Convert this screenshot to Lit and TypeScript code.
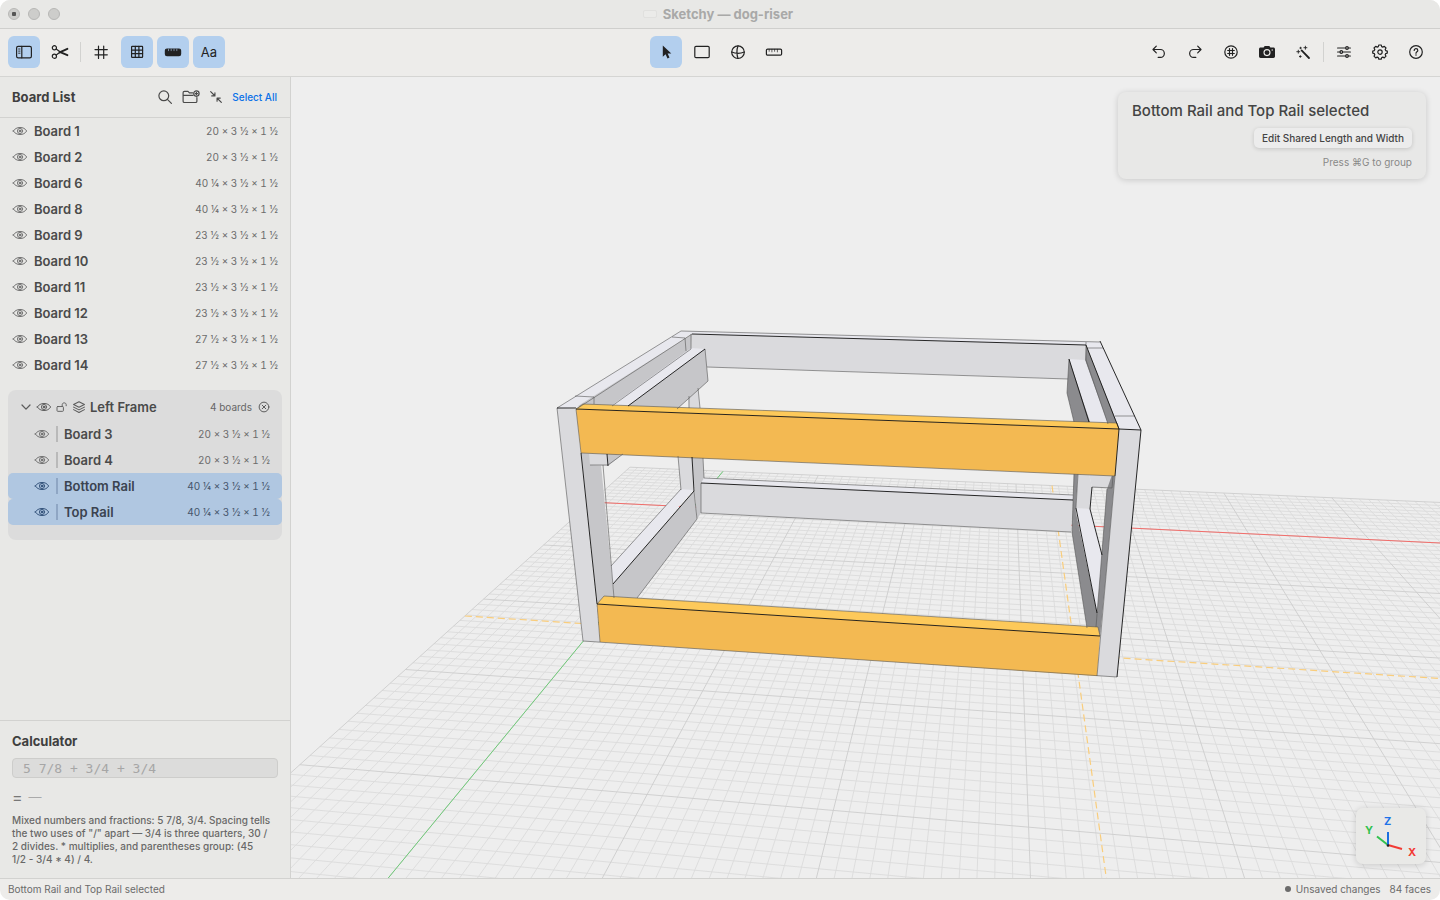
import { LitElement, html, css, svg, nothing } from "lit";
import { customElement, property } from "lit/decorators.js";
import { classMap } from "lit/directives/class-map.js";

const icons: Record<string, unknown> = {
  sidebar: svg`<rect x="1.6" y="3.4" width="14.8" height="11.4" rx="1.6"/><path d="M6.8 3.4v11.4"/><path d="M3.6 6h1.4M3.6 8.1h1.4M3.600 10.200h1.400" stroke-width=".9"/>`,
  scissors: svg`<circle cx="3.4" cy="4.8" r="2.1"/><circle cx="3.4" cy="13.2" r="2.1"/><path d="M5.2 6 8.600 8.400M5.200 12 8.600 9.600"/><path d="m8.600 8.800 7.800 3.400M8.600 9.400l7.800-3.600" stroke-width="1.900"/>`,
  hash: svg`<path d="M6.5 3v12.4M11.7 3v12.4M3 6.6h12.3M3 11.8h12.3"/>`,
  grid: svg`<rect x="3.6" y="3.4" width="11" height="11" rx=".6"/><path d="M7.3 3.4v11M10.900 3.400v11M3.600 7.100h11M3.600 10.700h11"/>`,
  rulerFill: svg`<rect x="1.4" y="6" width="15.2" height="6.6" rx="1.6" fill="currentColor"/><path d="M4.500 6.200v1.500M7.200 6.200v1.500M10 6.200v1.500M12.800 6.200v1.500" stroke="#b3cfee" stroke-width=".6"/>`,
  cursor: svg`<path d="M5.8 2.6v11.2l2.8-2.5 1.9 4.2 2-.9-1.9-4.1h3.7z" fill="currentColor" stroke="none"/>`,
  rect: svg`<rect x="1.8" y="3.4" width="14.4" height="11.2" rx="1.2"/>`,
  sphere: svg`<circle cx="9" cy="9.2" r="6.3"/><path d="M9 2.9C7.6 6 7.6 12 9 15.5M2.7 9c3.6 1.5 9 1.5 12.6 0"/>`,
  ruler: svg`<rect x="1.4" y="6.1" width="15.2" height="6" rx="1.2"/><path d="M4.2 6.3v2M6.9 6.3v2.6M9.6 6.3v2M12.4 6.3v2.6" stroke-width=".7"/>`,
  undo: svg`<path d="M6.3 3.2 3 6.5l3.3 3.3M3.2 6.5h7.2a3.9 3.9 0 0 1 0 7.9H8.2"/>`,
  redo: svg`<path d="M11.7 3.2 15 6.5l-3.3 3.3M14.8 6.5H7.6a3.9 3.9 0 0 0 0 7.9h2.2"/>`,
  hashCircle: svg`<circle cx="9" cy="9" r="6.2"/><path d="M7.5 5.7v6.6M10.5 5.7v6.6M5.7 7.5h6.6M5.7 10.5h6.6"/>`,
  camera: svg`<path d="M2.6 4.6h3l1.1-1.7h4.6l1.1 1.7h3c.9 0 1.6.7 1.6 1.6v7.1c0 .9-.7 1.6-1.6 1.6H2.6c-.9 0-1.6-.7-1.6-1.6V6.2c0-.9.7-1.6 1.6-1.6z" fill="currentColor" stroke="none"/><circle cx="9" cy="9.6" r="3" stroke="#edecea" stroke-width="1.1"/><circle cx="14.2" cy="7" r=".7" fill="#edecea" stroke="none"/>`,
  wand: svg`<path d="M7.6 7.4 15 15" stroke-width="1.8"/><path d="M11.4 3.2v3M9.9 4.7h3M4.3 7.2v3M2.8 8.7h3M6.3 12.6v1.8M5.4 13.5h1.8M6.6 4.2v1.6M5.8 5h1.6" stroke-width=".9"/>`,
  sliders: svg`<path d="M2.6 5h8.100M13.300 5h2.100M2.600 9H5M7.600 9h7.800M2.600 13h8.100M13.300 13h2.100"/><circle cx="12" cy="5" r="1.3"/><circle cx="6.3" cy="9" r="1.3"/><circle cx="12" cy="13" r="1.3"/>`,
  gear: svg`<path d="M7.8 2h2.4l.5 1.6 1.1.5 1.5-.8L15 5l-.8 1.5.5 1.1 1.6.5v2l-1.6.5-.5 1.1.8 1.5-1.7 1.7-1.5-.8-1.1.5-.5 1.6H7.8l-.5-1.6-1.1-.5-1.5.8L3 13.200l.8-1.500-.5-1.100-1.600-.5v-2l1.600-.5.5-1.100L3 5l1.700-1.700 1.500.8 1.100-.5z"/><circle cx="9" cy="9.100" r="2.200"/>`,
  help: svg`<circle cx="9" cy="9" r="6.3"/><path d="M7.2 7.400c0-2.300 3.600-2.300 3.600 0 0 1.400-1.800 1.400-1.800 2.900"/><circle cx="9" cy="12.100" r=".75" fill="currentColor" stroke="none"/>`,
  search: svg`<circle cx="7.8" cy="7.8" r="4.9"/><path d="m11.4 11.4 4 4"/>`,
  folderPlus: svg`<path d="M10.6 4.8H7.4L6 3.400H2.400c-.8 0-1.300.5-1.300 1.300v8.500c0 .8.5 1.300 1.300 1.300h11.200c.8 0 1.300-.5 1.300-1.300V9.600M1.100 7.400h9.800"/><circle cx="14.400" cy="5.600" r="2.700"/><path d="M14.400 4.400v2.400M13.200 5.600h2.400"/>`,
  collapse: svg`<path d="m3 3 4.600 4.600M7.800 4.200v3.600H4.200M15 15l-4.600-4.600M10.200 13.800v-3.600h3.600"/>`,
  eye: svg`<path d="M1.5 9C4.500 3.600 13.500 3.600 16.500 9 13.500 14.400 4.500 14.400 1.500 9z"/><circle cx="9" cy="9" r="2.900"/><circle cx="9" cy="9" r="1" fill="currentColor"/>`,
  unlock: svg`<rect x="1.5" y="8.3" width="9.6" height="7.2" rx="1.2"/><path d="M9.3 8.300V5.500c0-3.600 6-3.600 6 0v1.600"/>`,
  layers: svg`<path d="m9 2.200 7 3.600-7 3.600-7-3.600zM2 9.100l7 3.600 7-3.600M2 12.400 9 16l7-3.600"/>`,
  chevron: svg`<path d="m3 6 6 6.200L15 6"/>`,
  close: svg`<circle cx="9" cy="9" r="7.3"/><path d="m6.300 6.300 5.400 5.400M11.700 6.300l-5.400 5.400"/>`,
};

const icon = (name: string, size = 18, stroke = 1.2) => html`<svg
  width=${size} height=${size} viewBox="0 0 18 18" fill="none" stroke="currentColor"
  stroke-width=${stroke} stroke-linecap="round" stroke-linejoin="round" aria-hidden="true">${icons[name]}</svg>`;

const reset = css`
  * { box-sizing: border-box; }
  button {
    font: inherit; color: inherit; background: none; border: 0; padding: 0; margin: 0;
    display: inline-flex; align-items: center; justify-content: center;
  }
  svg { display: block; flex: none; }
`;

interface Board { name: string; dims: string; selected?: boolean; }

@customElement("board-row")
class BoardRow extends LitElement {
  @property({ attribute: false }) board!: Board;
  @property({ type: Boolean }) nested = false;

  static styles = [reset, css`
    :host { display: block; }
    .row {
      display: flex; align-items: center; height: 26px; padding: 0 12px; color: #4a4a4a;
    }
    .name { margin-left: 6px; flex: 1; font-size: 13px; font-weight: 600; text-align: left; }
    .dims { font-size: 10px; color: #6b6b6b; white-space: nowrap; font-variant-numeric: tabular-nums; }
    .eye { color: #707070; }
    .nested { padding: 0 12px 0 26px; }
    .bar { width: 2px; height: 16px; margin-left: 6px; background: #b9b9b9; }
    .selected { background: #b0c7e1; border-radius: 5px; color: #3b4350; }
    .selected .eye { color: #33527a; }
    .selected .dims { color: #46566c; }
    .selected .bar { background: #8fa6c4; }
  `];

  render() {
    const b = this.board;
    return html`<div class=${classMap({ row: true, nested: this.nested, selected: !!b.selected })}>
      <button class="eye" aria-label="Toggle visibility of ${b.name}">${icon("eye", 16, 1.1)}</button>
      ${this.nested ? html`<span class="bar"></span>` : nothing}
      <span class="name">${b.name}</span>
      <span class="dims">${b.dims}</span>
    </div>`;
  }
}

/** Ground plane projection. Units are feet; both vanishing points lie on the horizon. */
const HORIZON = 131;
const ground = (x: number, y: number): [number, number] => {
  const depth = 376 / (1 - 0.0133 * x - 0.105 * y);
  return [1003 + depth * (0.2866 * x - 0.823), HORIZON + depth];
};
const segment = (a: [number, number], b: [number, number]) => {
  const [p, q] = [ground(...a), ground(...b)];
  return `M${p[0].toFixed(1)} ${p[1].toFixed(1)}L${q[0].toFixed(1)} ${q[1].toFixed(1)}`;
};
const MIN = -1, MAX_X = 9, MAX_Y = 6;
const gridLines = (major: boolean) => {
  let d = "";
  for (let i = MIN * 12; i <= MAX_X * 12; i++) {
    if ((i % 12 === 0) === major) d += segment([i / 12, MIN], [i / 12, MAX_Y]);
  }
  for (let i = MIN * 12; i <= MAX_Y * 12; i++) {
    if ((i % 12 === 0) === major) d += segment([MIN, i / 12], [MAX_X, i / 12]);
  }
  return d;
};

const LIGHT = "#dadadd", TOP = "#e8e8ee", MID = "#c6c6c9", DARK = "#8b8b8e", FACE = "#f3b952", FACE_TOP = "#fdc95a";

const faces: [string, string][] = [
  // back rails
  [LIGHT, "692,334 1086,345 1085,362 1068,379 707,367 691,350"],
  [TOP, "681,331 1100,342 1086,345 692,334"],
  [TOP, "704,478 1073,495 1073,500 701,483"],
  [LIGHT, "701,483 1073,500 1071,532 701,513"],
  // back left post
  [LIGHT, "688,397 698,388 700,408 689,408"],
  [LIGHT, "678,456 692,457 694,491 681,490"],
  [MID, "692,457 703,458 704,478 701,483 701,513 697,519"],
  // left side
  [TOP, "681,331 692,333 578,408 557,408"],
  [MID, "692,334 691,349 612,406 578,406"],
  [TOP, "691,348 705,349 628,406 611,406"],
  [MID, "705,349 708,381 677,409 628,406"],
  [TOP, "681,489 693,490 613,584 611,566"],
  [MID, "694,491 697,519 637,598 614,598 613,584"],
  [MID, "581,453 600,454 614,598 597,604"],
  [MID, "607,454 623,454 608,466"],
  [LIGHT, "589,453 607,454 608,466 590,465"],
  [LIGHT, "557,408 576,409 600,642 583,641"],
  // right side
  [TOP, "1086,342 1100,342 1141,430 1119,429"],
  [DARK, "1086,345 1119,428 1107,424 1085,361"],
  [TOP, "1069,359 1085,360 1108,424 1089,422"],
  [DARK, "1069,359 1067,393 1074,422 1090,422"],
  [DARK, "1074,473 1078,473 1076,508 1072,532"],
  [LIGHT, "1078,473 1089,474 1092,487 1090,509 1076,508"],
  [LIGHT, "1089,474 1114,475 1112,488 1092,487"],
  [TOP, "1076,508 1090,509 1102,555 1097,613"],
  [DARK, "1075,508 1072,532 1087,628 1097,628 1097,613"],
  [DARK, "1112,475 1117,475 1100,636 1096,627 1107,489"],
  [LIGHT, "1119,429 1141,430 1117,677 1097,676"],
  // selected front rails
  [FACE, "576,409 1119,429 1115,476 581,453"],
  [FACE_TOP, "583,404 1117,423 1119,429 576,409"],
  [FACE, "597,604 1100,636 1097,676 600,642"],
  [FACE_TOP, "604,596 1098,627 1100,636 597,604"],
];

const strongEdges = "M692 334 1086 345M576 409 1119 429M597 604 1100 636M701 483 1073 500M557 408H576M1119 429 1141 430 1117 677M581 453 597 604M1100 341 1141 430M705 349 628 406M694 491 613 584M1119 429 1115 476M1086 345 1119 429M1069 359 1089 422M1076 508 1097 613M607 454 608 466M692 457 694 491M1102 555 1090 509 1092 487";
const fineEdges = "M681 331 1100 342M681 331 557 408 583 641 1117 677M692 334 578 408M672 337 685 338M575 396 594 397M685 338 686 351M594 397V404M691 334V349L612 406M705 349 708 381 677 409M707 367 1068 379M681 489 611 566M694 491 697 519 637 598M678 456 681 490M689 396V408M698 388 700 408M603 465 614 598M704 478 1073 495M701 513 1071 532M703 458 704 478M701 483V513M590 465H608L623 454M1087 348H1103M1115 416H1135M1086 342V360L1108 424M1069 359 1067 393 1074 422M1074 474 1072 532 1087 628M1078 474 1076 508M1107 489 1096 627M1092 487 1112 488M1113 476 1112 488M583 404 1117 423 1119 429M576 409 581 453 1115 476 1097 676M604 596 1098 627 1100 636M576 409 583 404M600 642 597 604 604 596";

@customElement("model-view")
class ModelView extends LitElement {
  static styles = [reset, css`
    :host { display: grid; position: relative; background: #eeeeee; overflow: hidden; min-width: 0; min-height: 0; }
    .scene { width: 100%; height: 100%; min-height: 0; grid-area: 1 / 1; }
    .panel {
      position: absolute; top: 15px; right: 14px; width: 308px; padding: 9px 14px 10px;
      background: #e8e8e7; border-radius: 8px; box-shadow: 0 1px 6px rgba(0,0,0,.16);
      display: flex; flex-direction: column; align-items: flex-end;
    }
    .heading { align-self: flex-start; margin: 0; font-size: 15px; line-height: 20px; font-weight: 500; color: #444; }
    .edit {
      height: 20px; margin-top: 7px; padding: 0 8px; border-radius: 5px; background: #ececec;
      font-size: 10px; font-weight: 500; color: #444; box-shadow: 0 1px 4px rgba(0,0,0,.16);
    }
    .hint { margin: 7px 0 0; font-size: 10px; line-height: 14px; color: #888; }
    .axes {
      position: absolute; right: 14px; bottom: 14px; width: 70px; height: 56px; border-radius: 7px;
      background: #e9e9e7; box-shadow: 0 1px 6px rgba(0,0,0,.16);
    }
    .axis { font: 700 11px Inter, sans-serif; }
  `];

  render() {
    return html`
      <svg class="scene" viewBox="291 77 1149 801" preserveAspectRatio="xMidYMid slice" fill="none" role="img" aria-label="Perspective view of the frame">
        <path d=${gridLines(false)} stroke="#dbdbdb" stroke-width=".9"/>
        <path d=${gridLines(true)} stroke="#cdcdcd" stroke-width=".9"/>
        <path d=${segment([0, 0], [MAX_X, 0])} stroke="#f26d6a"/>
        <path d=${segment([MIN, 0], [0, 0])} stroke="#f26d6a"/>
        <path d=${segment([0, MIN], [0, MAX_Y])} stroke="#70cb79"/>
        <g stroke="#f9cd7c" stroke-width="1.2" stroke-dasharray="7 4">
          <path d=${segment([MIN, 27.2 / 12], [MAX_X, 27.2 / 12])}/>
          <path d=${segment([40.25 / 12, MIN], [40.25 / 12, MAX_Y])}/>
        </g>
        ${faces.map(([fill, points]) => svg`<polygon fill=${fill} points=${points}/>`)}
        <path d=${fineEdges} stroke="#555" stroke-width=".6"/>
        <path d=${strongEdges} stroke="#111" stroke-width=".9"/>
      </svg>
      <section class="panel">
        <h2 class="heading">Bottom Rail and Top Rail selected</h2>
        <button class="edit">Edit Shared Length and Width</button>
        <p class="hint">Press ⌘G to group</p>
      </section>
      <svg class="axes" viewBox="0 0 70 56" fill="none" stroke-width="2" role="img" aria-label="Axes">
        <path d="M32 37 21 28.5" stroke="#32c14f"/><path d="M32 37 46 41" stroke="#f23a34"/><path d="M32 38V24" stroke="#1b6fe0"/>
        <circle cx="32" cy="37.5" r="1.3" fill="#222"/>
        <text class="axis" x="28" y="17" fill="#1f73e8">Z</text>
        <text class="axis" x="9" y="26" fill="#32c14f">Y</text>
        <text class="axis" x="52" y="48" fill="#f23a34">X</text>
      </svg>`;
  }
}

const boards: Board[] = [
  { name: "Board 1", dims: "20 × 3 ½ × 1 ½" },
  { name: "Board 2", dims: "20 × 3 ½ × 1 ½" },
  { name: "Board 6", dims: "40 ¼ × 3 ½ × 1 ½" },
  { name: "Board 8", dims: "40 ¼ × 3 ½ × 1 ½" },
  { name: "Board 9", dims: "23 ½ × 3 ½ × 1 ½" },
  { name: "Board 10", dims: "23 ½ × 3 ½ × 1 ½" },
  { name: "Board 11", dims: "23 ½ × 3 ½ × 1 ½" },
  { name: "Board 12", dims: "23 ½ × 3 ½ × 1 ½" },
  { name: "Board 13", dims: "27 ½ × 3 ½ × 1 ½" },
  { name: "Board 14", dims: "27 ½ × 3 ½ × 1 ½" },
];
const frameBoards: Board[] = [
  { name: "Board 3", dims: "20 × 3 ½ × 1 ½" },
  { name: "Board 4", dims: "20 × 3 ½ × 1 ½" },
  { name: "Bottom Rail", dims: "40 ¼ × 3 ½ × 1 ½", selected: true },
  { name: "Top Rail", dims: "40 ¼ × 3 ½ × 1 ½", selected: true },
];

@customElement("app-root")
class AppRoot extends LitElement {
  static styles = [reset, css`
    :host {
      display: grid; grid-template-rows: auto auto minmax(0, 1fr) auto; height: 100vh;
      font-family: Inter, "Noto Sans", "DejaVu Sans", sans-serif; color: #4a4a4a;
      background: #edecea; border-radius: 10px; overflow: hidden;
    }
    .titlebar {
      display: grid; grid-template-columns: 1fr auto 1fr; align-items: center; height: 29px;
      padding: 0 12px 1px 8px; background: #e8e8e6; border-bottom: 1px solid #cfcfcd;
    }
    .lights { display: flex; gap: 8px; }
    .light { width: 12px; height: 12px; border-radius: 50%; background: #cdcdcb; border: 1px solid #b7b7b5; }
    .edited { background: radial-gradient(circle, #555 0 2px, #cdcdcb 2.5px); }
    .title { display: flex; align-items: center; gap: 6px; margin: 0; font-size: 13px; font-weight: 700; color: #a9a9a8; }
    .doc { width: 14px; height: 8px; border: 1px solid #e0e0de; border-radius: 2px; background: #ebebe9; }
    .toolbar {
      display: grid; grid-template-columns: 1fr auto 1fr; align-items: center; height: 48px;
      padding: 0 8px 1px; background: #edecea; border-bottom: 1px solid #d5d5d3; color: #222;
    }
    .tools { display: flex; align-items: center; gap: 4px; }
    .end { justify-content: flex-end; }
    .tool { width: 32px; height: 32px; border-radius: 6px; font-size: 13px; }
    .on { background: #b3cfee; }
    .sep { width: 1px; height: 20px; background: #d2d2d0; }
    .main { display: grid; grid-template-columns: 291px minmax(0, 1fr); min-height: 0; }
    .sidebar { display: flex; flex-direction: column; background: #e8e8e6; border-right: 1px solid #d2d2d0; min-height: 0; }
    .head { display: flex; align-items: center; height: 41px; padding: 0 13px 0 12px; border-bottom: 1px solid #d2d2d0; }
    .h { margin: 0; font-size: 13px; line-height: 16px; font-weight: 700; color: #3f3f3f; }
    .actions { display: flex; align-items: center; gap: 8px; margin-left: auto; color: #4a4a4a; }
    .all { font-size: 10px; font-weight: 500; color: #0a70e8; }
    .list { flex: 1; min-height: 0; overflow: hidden; }
    .group { margin: 12px 8px 0; padding-bottom: 15px; border-radius: 8px; background: #dcdcdc; }
    .ghead { display: flex; align-items: center; gap: 4px; height: 31px; padding: 3px 12px 0; color: #5c5c5c; }
    .gname { flex: 1; font-size: 13px; font-weight: 600; color: #4a4a4a; }
    .count { margin-right: 2px; font-size: 10px; color: #666; }
    .calc { padding: 12px 12px 12px; border-top: 1px solid #d2d2d0; }
    .label { display: block; }
    .expr {
      display: block; width: 100%; height: 20px; margin-top: 9px; padding: 0 10px; border: 1px solid #cdcdcb;
      border-radius: 4px; background: #dcdcdb; font: 13px "DejaVu Sans Mono", monospace; color: #444; outline: 0;
    }
    .expr::placeholder { color: #a6a6a6; opacity: 1; }
    .result { display: flex; gap: 6px; margin-top: 10px; font-size: 16px; line-height: 18px; color: #777; }
    .none { color: #aaa; font-size: 13px; }
    .help { margin: 8px 0 0; font-size: 10px; line-height: 13px; font-weight: 500; color: #686868; }
    .status {
      display: flex; align-items: center; justify-content: space-between; height: 22px; padding: 0 9px 1px 8px;
      border-top: 1px solid #d2d2d0; font-size: 10px; color: #6b6b6b;
    }
    .right { display: flex; align-items: center; gap: 9px; }
    .unsaved { display: flex; align-items: center; gap: 5px; }
    .dot { width: 6px; height: 6px; border-radius: 50%; background: #6b6b6b; }
  `];

  private tool(name: string, label: string, on = false) {
    return html`<button class=${classMap({ tool: true, on })} aria-label=${label} aria-pressed=${on}>${icon(name)}</button>`;
  }

  render() {
    return html`
      <header class="titlebar">
        <div class="lights">
          <button class="light edited" aria-label="Close"></button>
          <button class="light" aria-label="Minimize"></button>
          <button class="light" aria-label="Zoom"></button>
        </div>
        <h1 class="title"><span class="doc"></span>Sketchy — dog-riser</h1>
      </header>
      <nav class="toolbar">
        <div class="tools">
          ${this.tool("sidebar", "Sidebar", true)}${this.tool("scissors", "Cut list")}
          <span class="sep"></span>
          ${this.tool("hash", "Snap")}${this.tool("grid", "Grid", true)}${this.tool("rulerFill", "Dimensions", true)}
          <button class="tool on" aria-pressed="true">Aa</button>
        </div>
        <div class="tools">
          ${this.tool("cursor", "Select", true)}${this.tool("rect", "Board")}${this.tool("sphere", "Orbit")}${this.tool("ruler", "Measure")}
        </div>
        <div class="tools end">
          ${this.tool("undo", "Undo")}${this.tool("redo", "Redo")}${this.tool("hashCircle", "Grid origin")}${this.tool("camera", "Camera")}${this.tool("wand", "Tidy")}
          <span class="sep"></span>
          ${this.tool("sliders", "Adjust")}${this.tool("gear", "Settings")}${this.tool("help", "Help")}
        </div>
      </nav>
      <main class="main">
        <aside class="sidebar">
          <div class="head">
            <h2 class="h">Board List</h2>
            <div class="actions">
              <button aria-label="Search">${icon("search", 18)}</button>
              <button aria-label="New group">${icon("folderPlus", 18)}</button>
              <button aria-label="Collapse all">${icon("collapse", 16, 1.3)}</button>
              <button class="all">Select All</button>
            </div>
          </div>
          <div class="list">
            ${boards.map((b) => html`<board-row .board=${b}></board-row>`)}
            <section class="group">
              <div class="ghead">
                <button aria-label="Collapse">${icon("chevron", 12, 1.9)}</button>
                <button aria-label="Visibility">${icon("eye", 16, 1.1)}</button>
                <button aria-label="Lock">${icon("unlock", 12, 1.4)}</button>
                ${icon("layers", 14, 1.3)}
                <span class="gname">Left Frame</span>
                <span class="count">4 boards</span>
                <button aria-label="Ungroup">${icon("close", 12, 1.5)}</button>
              </div>
              ${frameBoards.map((b) => html`<board-row nested .board=${b}></board-row>`)}
            </section>
          </div>
          <section class="calc">
            <label class="h label" for="expr">Calculator</label>
            <input class="expr" id="expr" type="text" placeholder="5 7/8 + 3/4 + 3/4">
            <div class="result"><span>=</span><span class="none">—</span></div>
            <p class="help">Mixed numbers and fractions: 5 7/8, 3/4. Spacing tells the two uses of "/" apart — 3/4 is three quarters, 30 /<br>2 divides. * multiplies, and parentheses group: (45<br>1/2 - 3/4 * 4) / 4.</p>
          </section>
        </aside>
        <model-view></model-view>
      </main>
      <footer class="status">
        <span>Bottom Rail and Top Rail selected</span>
        <div class="right">
          <span class="unsaved"><span class="dot"></span>Unsaved changes</span>
          <span>84 faces</span>
        </div>
      </footer>`;
  }
}
